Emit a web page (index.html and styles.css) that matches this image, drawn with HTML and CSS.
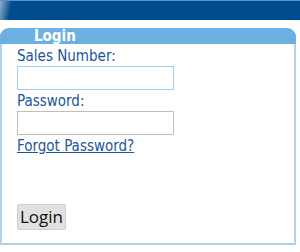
FILE: index.html
```html
<!DOCTYPE html>
<html lang="en">
<head>
    <meta charset="UTF-8">
    <meta name="viewport" content="width=device-width, initial-scale=1.0">
    <title>Login</title>
    <link rel="stylesheet" href="styles.css">
</head>
<body>
    <div class="top-bar"></div>

    <div class="login-box">
        <div class="login-box__header">Login</div>
        <form class="login-form">
            <label class="field-label" for="sales-number">Sales Number:</label>
            <input type="text" id="sales-number" class="field-input field-input--active">

            <label class="field-label" for="password">Password:</label>
            <input type="password" id="password" class="field-input">

            <a href="#" class="forgot-link">Forgot Password?</a>

            <button type="submit" class="login-btn">Login</button>
        </form>
    </div>
</body>
</html>
```

FILE: styles.css
```css
body {
    font-family: "DejaVu Sans Condensed", "DejaVu Sans", Verdana, sans-serif;
    font-stretch: condensed;
    background-color: #fff;
    margin: 0;
    padding: 0;
}

.top-bar {
    height: 20px;
    background: linear-gradient(100deg, rgba(255, 255, 255, 0.55) 0, rgba(255, 255, 255, 0) 12px), #004a8e;
    border-top: 1px solid #5f8fc9;
    box-sizing: border-box;
}

.login-box {
    margin: 8px 4px 7px 0;
    height: 217px;
    border: 2px solid #abd2f1;
    border-top: none;
    border-radius: 9px 9px 0 0;
    box-sizing: border-box;
}

.login-box__header {
    height: 16px;
    background: #6cb0e2;
    border-radius: 9px 9px 0 0;
    margin: 0 -2px;
    padding-left: 34px;
    color: #fff;
    font-weight: bold;
    font-size: 15px;
    line-height: 17px;
}

.login-form {
    display: flex;
    flex-direction: column;
    align-items: flex-start;
    padding: 3px 0 0 15px;
}

.field-label {
    color: #1d559a;
    font-size: 15px;
    line-height: 18px;
}

.field-input {
    width: 157px;
    height: 24px;
    box-sizing: border-box;
    border: 1px solid #bdbdbd;
    margin: 1px 0 2px;
    padding: 0 3px;
}

.field-input--active {
    border-color: #9fcdf2;
}

.field-input:focus {
    outline: none;
    border-color: #9fcdf2;
}

.forgot-link {
    color: #1d559a;
    font-size: 15px;
    line-height: 18px;
}

.login-btn {
    margin-top: 49px;
    height: 26px;
    padding: 0 2px;
    font-family: "Open Sans", "Noto Sans", sans-serif;
    font-stretch: normal;
    font-size: 17px;
    line-height: 22px;
    color: #111;
    background: #e1e1e1;
    border: 1px solid #cfcfcf;
    border-radius: 2px;
}
```
